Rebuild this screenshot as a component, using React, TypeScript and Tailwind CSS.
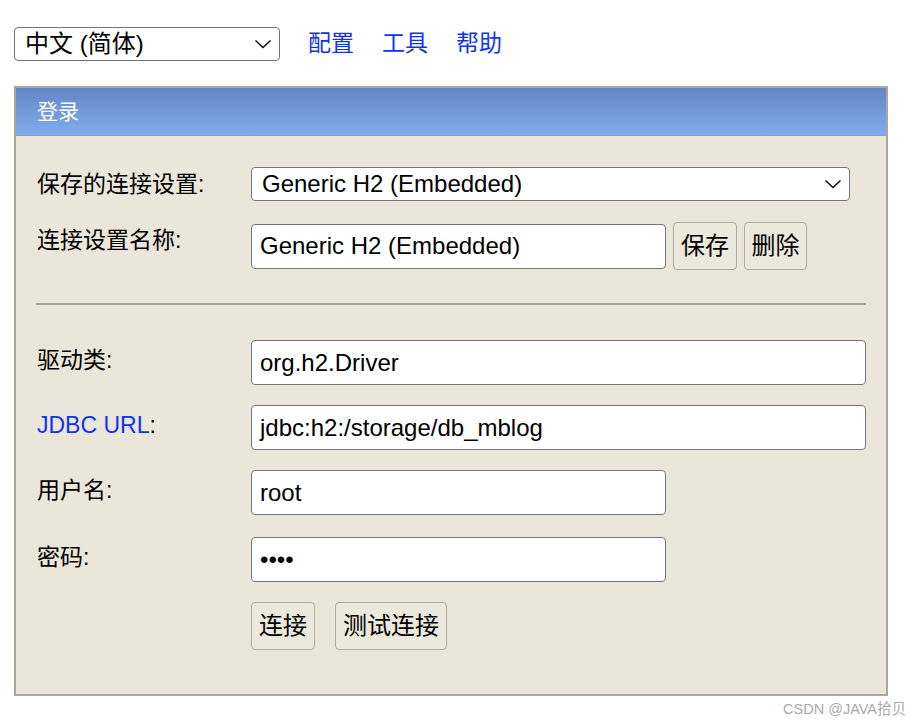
import React from "react";

const font = {
  fontFamily: '"Liberation Sans", "Noto Sans CJK SC", sans-serif',
};

function Chevron() {
  return (
    <svg width="18" height="10" viewBox="0 0 18 10" className="shrink-0">
      <path d="M1.5 1.5 L9 8.5 L16.5 1.5" fill="none" stroke="#111" strokeWidth="1.6" />
    </svg>
  );
}

function FakeSelect({ value, className }: { value: string; className: string }) {
  return (
    <div
      className={`flex items-center justify-between bg-white border border-[#767676] rounded-[4px] pl-[10px] pr-[7px] ${className}`}
    >
      <span className="text-[24px] leading-none text-black">{value}</span>
      <Chevron />
    </div>
  );
}

function TextBox({ value, className }: { value: string; className: string }) {
  return (
    <div
      className={`flex items-center bg-white border border-[#767676] rounded-[4px] pl-[8px] h-[45px] ${className}`}
    >
      <span className="text-[24px] leading-none text-black">{value}</span>
    </div>
  );
}

function Btn({ children, className }: { children: React.ReactNode; className: string }) {
  return (
    <button
      className={`h-[48px] flex items-center justify-center border-[1.5px] border-[#aeab9f] rounded-[4px] bg-[#ebe8dc] text-[24px] text-black ${className}`}
    >
      {children}
    </button>
  );
}

function Label({ children }: { children: React.ReactNode }) {
  return (
    <div className="w-[214px] shrink-0 text-[23px] leading-[40px] text-black">
      {children}
    </div>
  );
}

export default function App() {
  return (
    <div className="relative w-[924px] h-[726px] bg-white" style={font}>
      {/* top bar */}
      <div className="flex items-center pt-[27px] pl-[14px] h-[60px]">
        <FakeSelect value="中文 (简体)" className="w-[266px] h-[34px]" />
        <div className="flex items-center gap-[28px] ml-[28px] text-[23px] text-[#1133ee]">
          <span>配置</span>
          <span>工具</span>
          <span>帮助</span>
        </div>
      </div>

      {/* login panel */}
      <div className="mt-[26px] ml-[14px] w-[874px] h-[610px] border-2 border-[#aca899] bg-[#eae7da] flex flex-col">
        <div className="h-[48px] bg-gradient-to-b from-[#6486c5] to-[#80adee] border-b border-[#7aa4e4] flex items-center pl-[21px]">
          <span className="text-white text-[21px]">登录</span>
        </div>

        <div className="flex flex-col pl-[21px]">
          <div className="flex items-start mt-[31px]">
            <div className="w-[214px] shrink-0 text-[23px] leading-[34px] text-black">保存的连接设置:</div>
            <FakeSelect value="Generic H2 (Embedded)" className="w-[599px] h-[34px]" />
          </div>

          <div className="flex items-start mt-[21px]">
            <div className="w-[214px] shrink-0 text-[23px] leading-[36px] text-black">连接设置名称:</div>
            <div className="flex items-center gap-[7px]">
              <TextBox value="Generic H2 (Embedded)" className="w-[415px]" />
              <Btn className="w-[64px]">保存</Btn>
              <Btn className="w-[63px]">删除</Btn>
            </div>
          </div>

          <div className="mt-[33px] ml-[-1px] w-[830px] h-[2px] bg-[#a3a197]" />

          <div className="flex items-start mt-[35px]">
            <Label>驱动类:</Label>
            <TextBox value="org.h2.Driver" className="w-[615px]" />
          </div>

          <div className="flex items-start mt-[20px]">
            <Label>
              <span className="text-[#1133ee]">JDBC URL</span>:
            </Label>
            <TextBox value="jdbc:h2:/storage/db_mblog" className="w-[615px]" />
          </div>

          <div className="flex items-start mt-[20px]">
            <Label>用户名:</Label>
            <TextBox value="root" className="w-[415px]" />
          </div>

          <div className="flex items-start mt-[22px]">
            <Label>密码:</Label>
            <TextBox value="••••" className="w-[415px]" />
          </div>

          <div className="flex items-center gap-[20px] mt-[20px] ml-[214px]">
            <Btn className="w-[64px]">连接</Btn>
            <Btn className="w-[112px]">测试连接</Btn>
          </div>
        </div>
      </div>

      <div className="absolute right-[18px] top-[699px] text-[14.5px] text-[#a9a9a9]">
        CSDN @JAVA拾贝
      </div>
    </div>
  );
}
